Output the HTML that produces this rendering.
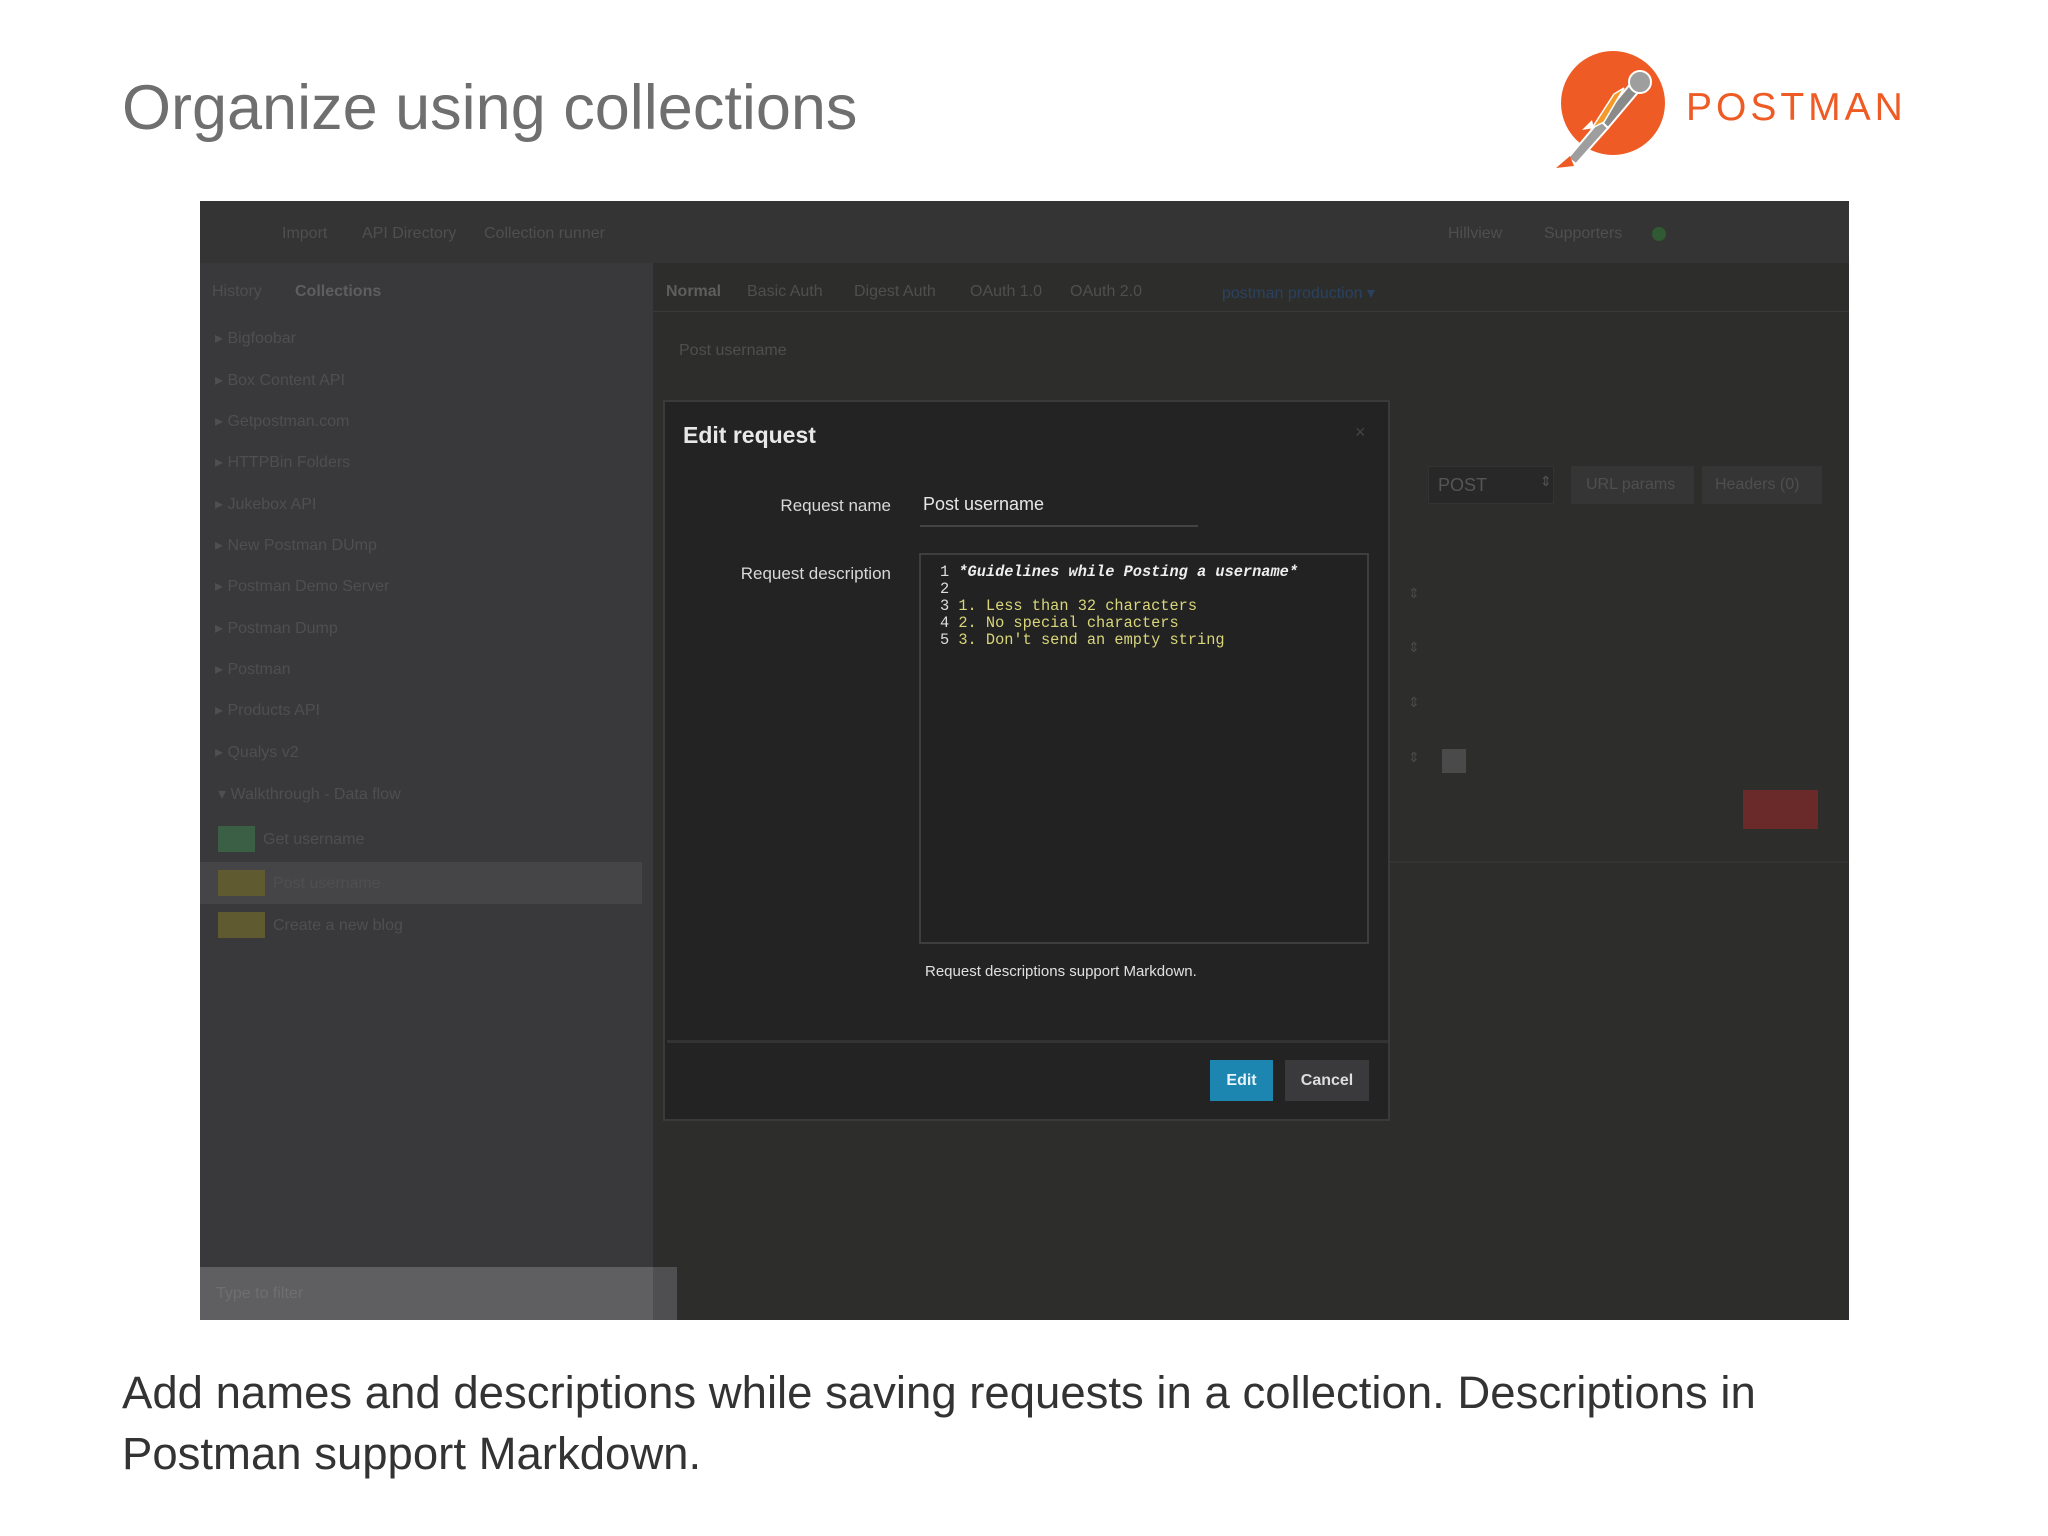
<!DOCTYPE html>
<html><head><meta charset="utf-8"><style>
*{margin:0;padding:0;box-sizing:border-box}
body{width:2048px;height:1536px;background:#fff;position:relative;overflow:hidden;font-family:"Liberation Sans",Arial,sans-serif}
.a{position:absolute;white-space:nowrap}
.dim{color:#4f4f4f;font-size:16px}
.row{position:absolute;left:200px;width:453px;height:41px;border-bottom:1px solid #343336}
.mono{font-family:"Liberation Mono","DejaVu Sans Mono",monospace;font-size:15.3px;line-height:17px}
</style></head><body>
<div class="a" style="left:122px;top:72px;font-size:63px;color:#6f6f6f">Organize using collections</div>

<svg class="a" style="left:1548px;top:48px" width="120" height="125" viewBox="0 0 120 125">
<circle cx="65" cy="55" r="52" fill="#ef5b25"/>
<path d="M20 110 L52 72 L60 80 L28 116 Z" fill="#9e9e9e" stroke="#fff" stroke-width="2"/>
<path d="M52 72 L84 34 L92 42 L60 80 Z" fill="#8a8a8a" stroke="#fff" stroke-width="2"/>
<path d="M44 80 L66 46 L76 40 L56 74 Z" fill="#f49a2a" stroke="#fff" stroke-width="1.5"/>
<circle cx="92" cy="34" r="11" fill="#9e9e9e" stroke="#fff" stroke-width="2"/>
<path d="M34 82 L44 72 L46 80Z" fill="#fff"/>
<path d="M8 120 L22 108 L26 118 Z" fill="#ef5b25"/>
</svg>
<div class="a" style="left:1686px;top:86px;font-size:39px;color:#ef5b25;letter-spacing:4px;font-weight:300">POSTMAN</div>

<!-- app screenshot -->
<div class="a" style="left:200px;top:201px;width:1649px;height:1119px;background:#2d2d2b;overflow:hidden">
  <div class="a" style="left:0;top:0;width:1649px;height:62px;background:#343434"></div>
  <div class="a dim" style="left:82px;top:24px">Import</div>
  <div class="a dim" style="left:162px;top:24px">API Directory</div>
  <div class="a dim" style="left:284px;top:24px">Collection runner</div>
  <div class="a dim" style="left:1248px;top:24px">Hillview</div>
  <div class="a dim" style="left:1344px;top:24px">Supporters</div>
  <div class="a" style="left:1452px;top:26px;width:14px;height:14px;border-radius:7px;background:#2f5a34"></div>
  <div class="a" style="left:0;top:62px;width:453px;height:1004px;background:#39383b"></div>
  <div class="a dim" style="left:12px;top:82px">History</div>
  <div class="a" style="left:95px;top:82px;font-size:16px;color:#5e5e5e;font-weight:bold">Collections</div>
  <div class="a" style="left:0;top:1066px;width:453px;height:53px;background:#5f5e60"></div>
  <div class="a" style="left:453px;top:1066px;width:24px;height:53px;background:#4f4e50"></div>
  <div class="a" style="left:16px;top:1084px;font-size:16px;color:#6f6e70">Type to filter</div>
  <!-- tabs -->
  <div class="a" style="left:466px;top:82px;font-size:16px;color:#5e5e5e;font-weight:bold">Normal</div>
  <div class="a dim" style="left:547px;top:82px">Basic Auth</div>
  <div class="a dim" style="left:654px;top:82px">Digest Auth</div>
  <div class="a dim" style="left:770px;top:82px">OAuth 1.0</div>
  <div class="a dim" style="left:870px;top:82px">OAuth 2.0</div>
  <div class="a" style="left:1022px;top:82px;font-size:16px;color:#2a4260">postman production ▾</div>
  <div class="a" style="left:453px;top:110px;width:1196px;height:1px;background:#3a3a3a"></div>
  <div class="a dim" style="left:479px;top:141px">Post username</div>
  <div class="a" style="left:1228px;top:265px;width:126px;height:38px;background:#282828;border:1px solid #333"></div>
  <div class="a" style="left:1238px;top:274px;font-size:18px;color:#555">POST</div>
  <div class="a" style="left:1340px;top:272px;font-size:14px;color:#555">⇕</div>
  <div class="a" style="left:1371px;top:265px;width:123px;height:38px;background:#353535"></div>
  <div class="a dim" style="left:1386px;top:275px">URL params</div>
  <div class="a" style="left:1502px;top:265px;width:120px;height:38px;background:#353535"></div>
  <div class="a dim" style="left:1515px;top:275px">Headers (0)</div>
  <div class="a" style="left:1208px;top:384px;font-size:14px;color:#4a4a4a">⇕</div>
  <div class="a" style="left:1208px;top:438px;font-size:14px;color:#4a4a4a">⇕</div>
  <div class="a" style="left:1208px;top:493px;font-size:14px;color:#4a4a4a">⇕</div>
  <div class="a" style="left:1208px;top:548px;font-size:14px;color:#4a4a4a">⇕</div>
  <div class="a" style="left:1242px;top:548px;width:24px;height:24px;background:#4a4a4a"></div>
  <div class="a" style="left:1543px;top:589px;width:75px;height:39px;background:#6b2a2a"></div>
  <div class="a" style="left:1190px;top:660px;width:459px;height:2px;background:#333"></div>
</div>
<!-- sidebar rows -->
<div class="a dim" style="left:215px;top:328px">▸ Bigfoobar</div>
<div class="a dim" style="left:215px;top:370px">▸ Box Content API</div>
<div class="a dim" style="left:215px;top:411px">▸ Getpostman.com</div>
<div class="a dim" style="left:215px;top:452px">▸ HTTPBin Folders</div>
<div class="a dim" style="left:215px;top:494px">▸ Jukebox API</div>
<div class="a dim" style="left:215px;top:535px">▸ New Postman DUmp</div>
<div class="a dim" style="left:215px;top:576px">▸ Postman Demo Server</div>
<div class="a dim" style="left:215px;top:618px">▸ Postman Dump</div>
<div class="a dim" style="left:215px;top:659px">▸ Postman</div>
<div class="a dim" style="left:215px;top:700px">▸ Products API</div>
<div class="a dim" style="left:215px;top:742px">▸ Qualys v2</div>
<div class="a dim" style="left:218px;top:784px">▾ Walkthrough - Data flow</div>
<div class="a" style="left:200px;top:862px;width:442px;height:42px;background:#454447"></div>
<div class="a" style="left:218px;top:826px;width:37px;height:26px;background:#3a5f44"></div>
<div class="a dim" style="left:263px;top:831px">Get username</div>
<div class="a" style="left:218px;top:870px;width:47px;height:26px;background:#5f5a30"></div>
<div class="a dim" style="left:273px;top:875px">Post username</div>
<div class="a" style="left:218px;top:912px;width:47px;height:26px;background:#5f5a30"></div>
<div class="a dim" style="left:273px;top:917px">Create a new blog</div>

<!-- dialog -->
<div class="a" style="left:663px;top:400px;width:727px;height:721px;background:#232323;border:2px solid #3a3a3a">
  <div class="a" style="left:18px;top:20px;font-size:23px;color:#e8e8e8;font-weight:bold">Edit request</div>
  <div class="a" style="left:690px;top:20px;font-size:18px;color:#444">×</div>
  <div class="a" style="left:0;top:94px;width:226px;text-align:right;font-size:17px;color:#d8d8d8">Request name</div>
  <div class="a" style="left:258px;top:92px;font-size:18px;color:#e6e6e6">Post username</div>
  <div class="a" style="left:255px;top:123px;width:278px;height:2px;background:#444"></div>
  <div class="a" style="left:0;top:162px;width:226px;text-align:right;font-size:17px;color:#d8d8d8">Request description</div>
  <div class="a" style="left:254px;top:151px;width:450px;height:391px;border:2px solid #3e3e3e;background:#222"></div>
  <div class="a mono" style="left:275px;top:162px;color:#ddd">
    <div>1 <i style="color:#eee;font-weight:bold">*Guidelines while Posting a username*</i></div>
    <div>2</div>
    <div>3 <span style="color:#d8d57a">1. Less than 32 characters</span></div>
    <div>4 <span style="color:#d8d57a">2. No special characters</span></div>
    <div>5 <span style="color:#d8d57a">3. Don't send an empty string</span></div>
  </div>
  <div class="a" style="left:260px;top:561px;font-size:15px;color:#e0e0e0">Request descriptions support Markdown.</div>
  <div class="a" style="left:2px;top:638px;width:721px;height:3px;background:#333"></div>
  <div class="a" style="left:545px;top:658px;width:63px;height:41px;background:#1d86b0;color:#e8f4fa;font-size:16px;text-align:center;line-height:41px;font-weight:bold">Edit</div>
  <div class="a" style="left:620px;top:658px;width:84px;height:41px;background:#3a3a3c;color:#ddd;font-size:16px;text-align:center;line-height:41px;font-weight:bold">Cancel</div>
</div>

<div class="a" style="left:122px;top:1362px;font-size:45.5px;color:#333;line-height:61px;white-space:normal;width:1820px">Add names and descriptions while saving requests in a collection. Descriptions in<br>Postman support Markdown.</div>
</body></html>
